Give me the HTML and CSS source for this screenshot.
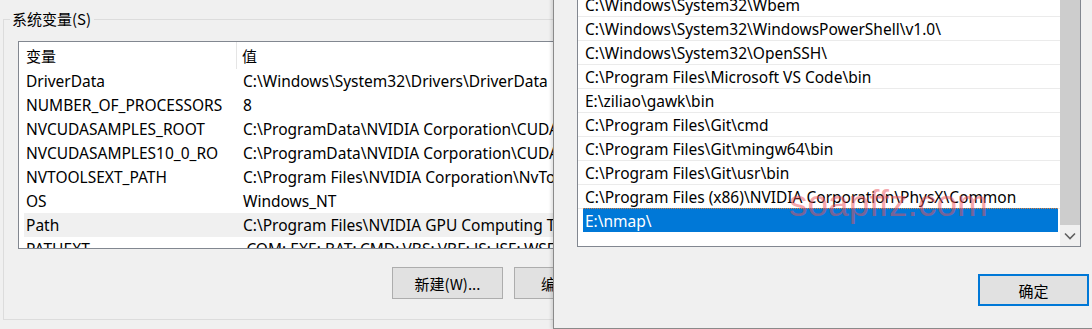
FILE: index.html
```html
<!DOCTYPE html>
<html lang="zh-CN">
<head>
<meta charset="utf-8">
<title>环境变量</title>
<link rel="stylesheet" href="styles.css">
</head>
<body>
<div class="page">
  <div class="group">
    <div class="legend">系统变量(S)</div>
    <div class="listview">
      <div class="lv-head">
        <div class="c1">变量</div>
        <div class="c2">值</div>
      </div>
      <div class="lv-row"><div class="c1">DriverData</div><div class="c2">C:\Windows\System32\Drivers\DriverData</div></div>
      <div class="lv-row"><div class="c1">NUMBER_OF_PROCESSORS</div><div class="c2">8</div></div>
      <div class="lv-row"><div class="c1">NVCUDASAMPLES_ROOT</div><div class="c2">C:\ProgramData\NVIDIA Corporation\CUDA Samples\v10.0</div></div>
      <div class="lv-row"><div class="c1">NVCUDASAMPLES10_0_RO</div><div class="c2">C:\ProgramData\NVIDIA Corporation\CUDA Samples\v10.0</div></div>
      <div class="lv-row"><div class="c1">NVTOOLSEXT_PATH</div><div class="c2">C:\Program Files\NVIDIA Corporation\NvToolsExt\</div></div>
      <div class="lv-row"><div class="c1">OS</div><div class="c2">Windows_NT</div></div>
      <div class="lv-row hot"><div class="c1">Path</div><div class="c2">C:\Program Files\NVIDIA GPU Computing Toolkit\CUDA\v10.0\bin</div></div>
      <div class="lv-row"><div class="c1">PATHEXT</div><div class="c2">.COM;.EXE;.BAT;.CMD;.VBS;.VBE;.JS;.JSE;.WSF;.WSH;.MSC</div></div>
    </div>
    <div class="btn-row">
      <button class="btn">新建(W)...</button>
      <button class="btn">编辑(I)...</button>
      <button class="btn">删除(L)</button>
    </div>
  </div>

  <div class="dialog">
    <div class="listbox">
      <div class="items">
        <div class="item"><span>C:\Windows\System32\Wbem</span></div>
        <div class="item"><span>C:\Windows\System32\WindowsPowerShell\v1.0\</span></div>
        <div class="item"><span>C:\Windows\System32\OpenSSH\</span></div>
        <div class="item"><span>C:\Program Files\Microsoft VS Code\bin</span></div>
        <div class="item"><span>E:\ziliao\gawk\bin</span></div>
        <div class="item"><span>C:\Program Files\Git\cmd</span></div>
        <div class="item"><span>C:\Program Files\Git\mingw64\bin</span></div>
        <div class="item"><span>C:\Program Files\Git\usr\bin</span></div>
        <div class="item"><span>C:\Program Files (x86)\NVIDIA Corporation\PhysX\Common</span></div>
        <div class="item selected"><span>E:\nmap\</span></div>
      </div>
      <div class="scrollbar">
        <div class="thumb"></div>
        <div class="arrow">
          <svg width="12" height="8" viewBox="0 0 12 8"><path d="M1 1.5 L6 6.5 L11 1.5" fill="none" stroke="#606060" stroke-width="1.6"/></svg>
        </div>
      </div>
    </div>
    <div class="dlg-buttons">
      <button class="btn default">确定</button>
      <button class="btn">取消</button>
    </div>
  </div>

  <div class="watermark">soapffz.com</div>
</div>
</body>
</html>
```

FILE: styles.css
```css
* { box-sizing: border-box; }
html, body { margin: 0; padding: 0; }
body {
  background: #f0f0f0;
  font-family: "Noto Sans", "Noto Sans CJK SC", sans-serif;
  font-size: 15.5px;
  color: #000;
}
.page {
  position: relative;
  width: 1092px;
  height: 329px;
  overflow: hidden;
}
.group {
  position: relative;
  margin: 19px 0 0 3px;
  width: 1000px;
  height: 301px;
  border: 1px solid #dcdcdc;
  padding: 21px 0 0 14px;
}
.legend {
  position: absolute;
  top: -11px;
  left: 6px;
  padding: 0 3px 0 2px;
  background: #f0f0f0;
  line-height: 20px;
  font-family: "Noto Sans CJK SC", sans-serif;
  font-size: 15px;
}
.listview {
  width: 700px;
  height: 208px;
  border: 1px solid #828790;
  background: #fff;
  overflow: hidden;
  white-space: nowrap;
}
.lv-head {
  display: flex;
  height: 27px;
  align-items: stretch;
  font-family: "Noto Sans CJK SC", sans-serif;
  font-size: 15px;
}
.lv-head .c1 {
  width: 218px;
  padding-left: 7px;
  border-right: 1px solid #e5e5e5;
  line-height: 27px;
}
.lv-head .c2 {
  padding-left: 5px;
  line-height: 27px;
}
.lv-row {
  display: flex;
  height: 24px;
  line-height: 24px;
  margin-left: 5px;
}
.lv-row .c1 { width: 213px; padding-left: 2px; flex: none; overflow: hidden; }
.lv-row .c2 { padding-left: 6px; }
.lv-row.hot { background: #f0f0f0; }

.btn-row {
  display: flex;
  gap: 11px;
  margin-top: 18px;
  padding-left: 374px;
}
.btn {
  width: 111px;
  height: 32px;
  flex: none;
  background: #e1e1e1;
  border: 1px solid #adadad;
  font-family: "Noto Sans CJK SC", "Noto Sans", sans-serif;
  font-size: 15px;
  color: #000;
  padding: 0;
}
.btn.default {
  border: 2px solid #0078d7;
}

.dialog {
  position: absolute;
  left: 553px;
  top: -40px;
  width: 700px;
  height: 369px;
  background: #f0f0f0;
  border-left: 1px solid #8a8a8a;
  border-bottom: 1px solid #8a8a8a;
  box-shadow: -2px 0 3px rgba(0,0,0,0.12);
  padding: 32px 0 0 23px;
  display: flex;
  flex-direction: column;
}
.listbox {
  width: 504px;
  height: 255px;
  border: 1px solid #828790;
  background: #fff;
  display: flex;
  overflow: hidden;
  flex: none;
}
.items {
  flex: 1;
  white-space: nowrap;
  overflow: hidden;
}
.item {
  height: 24px;
  line-height: 25px;
  border-bottom: 1px solid #ebebeb;
  padding: 0 2px 0 5px;
}
.item span {
  display: block;
  padding-left: 2px;
  height: 23px;
}
.item.selected {
  border-bottom: none;
  margin-top: -1px;
}
.item.selected span {
  background: #0078d7;
  color: #fff;
  border-top: 1px dotted #e0803a;
  height: 24px;
}
.scrollbar {
  width: 20px;
  flex: none;
  display: flex;
  flex-direction: column;
}
.thumb {
  flex: 1;
  background: #cdcdcd;
}
.arrow {
  height: 21px;
  background: #f0f0f0;
  display: flex;
  align-items: center;
  justify-content: center;
}
.dlg-buttons {
  display: flex;
  gap: 11px;
  margin-top: 27px;
  padding-left: 401px;
}
.watermark {
  position: absolute;
  left: 789px;
  top: 183px;
  font-family: "Liberation Sans", sans-serif;
  font-size: 37px;
  color: rgba(235, 80, 90, 0.5);
  pointer-events: none;
}
```
